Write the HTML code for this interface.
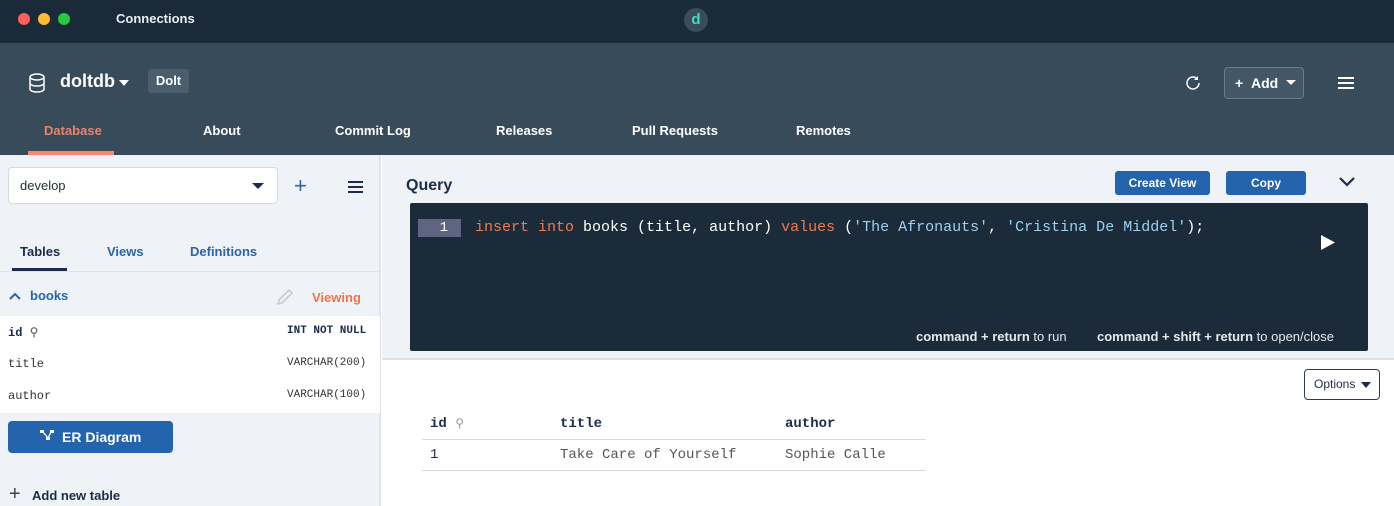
<!DOCTYPE html>
<html><head><meta charset="utf-8"><style>
*{box-sizing:border-box;margin:0;padding:0}
body{width:1394px;height:506px;overflow:hidden;font-family:"Liberation Sans",sans-serif;background:#fff;position:relative}
.abs{position:absolute}
.mono{font-family:"Liberation Mono","DejaVu Sans Mono",monospace}
</style></head><body>
<div class="abs" style="left:0;top:0;width:1394px;height:43px;background:#1b2a39"></div>
<div class="abs" style="left:18px;top:13px;width:12px;height:12px;border-radius:50%;background:#fe5f57"></div>
<div class="abs" style="left:38px;top:13px;width:12px;height:12px;border-radius:50%;background:#febc2e"></div>
<div class="abs" style="left:58px;top:13px;width:12px;height:12px;border-radius:50%;background:#28c840"></div>
<div class="abs" style="left:116px;top:11px;color:#e8edf2;font-size:13px;font-weight:bold">Connections</div>
<div class="abs" style="left:684px;top:8px;width:24px;height:24px;border-radius:50%;background:#3a4d5c;color:#3ee0c0;font-weight:bold;font-size:15px;text-align:center;line-height:23px">d</div>

<div class="abs" style="left:0;top:43px;width:1394px;height:112px;background:#384b5b"></div>
<svg class="abs" style="left:28px;top:73px" width="18" height="20" viewBox="0 0 18 20" fill="none" stroke="#fff" stroke-width="1.5"><ellipse cx="9" cy="4" rx="7" ry="3"/><path d="M2 4v12c0 1.7 3.1 3 7 3s7-1.3 7-3V4M2 10c0 1.7 3.1 3 7 3s7-1.3 7-3"/></svg>
<div class="abs" style="left:60px;top:71px;color:#fff;font-size:18px;font-weight:bold">doltdb</div>
<div class="abs" style="left:119px;top:80px;border-left:5px solid transparent;border-right:5px solid transparent;border-top:6px solid #fff"></div>
<div class="abs" style="left:148px;top:69px;width:41px;height:24px;border-radius:3px;background:#4b5e6e;color:#fff;font-size:13px;font-weight:bold;text-align:center;line-height:24px">Dolt</div>
<svg class="abs" style="left:1184px;top:74px" width="18" height="18" viewBox="0 0 18 18" fill="none" stroke="#fff" stroke-width="1.5"><path d="M15 9a6 6 0 1 1-2-4.5"/><path d="M14 2l0 4h-4z" fill="#fff" stroke="none"/></svg>
<div class="abs" style="left:1224px;top:67px;width:80px;height:32px;border:1px solid #6a7b89;border-radius:4px;background:#445767;color:#fff;font-size:14px;font-weight:bold;line-height:30px;padding-left:10px">+ &nbsp;Add</div>
<div class="abs" style="left:1286px;top:80px;border-left:5px solid transparent;border-right:5px solid transparent;border-top:5px solid #fff"></div>
<div class="abs" style="left:1338px;top:77px;width:16px;height:2px;background:#fff;box-shadow:0 5px 0 #fff,0 10px 0 #fff"></div>
<div class="abs" style="left:44px;top:123px;color:#e8846c;font-size:13px;font-weight:bold">Database</div>
<div class="abs" style="left:28px;top:151px;width:86px;height:4px;background:#f28b6c"></div>
<div class="abs" style="left:203px;top:123px;color:#fff;font-size:13px;font-weight:bold">About</div>
<div class="abs" style="left:335px;top:123px;color:#fff;font-size:13px;font-weight:bold">Commit Log</div>
<div class="abs" style="left:496px;top:123px;color:#fff;font-size:13px;font-weight:bold">Releases</div>
<div class="abs" style="left:632px;top:123px;color:#fff;font-size:13px;font-weight:bold">Pull Requests</div>
<div class="abs" style="left:796px;top:123px;color:#fff;font-size:13px;font-weight:bold">Remotes</div>

<!-- left panel -->
<div class="abs" style="left:0;top:155px;width:381px;height:351px;background:#eff2f7;border-right:2px solid #dfe3ea"></div>
<div class="abs" style="left:8px;top:167px;width:270px;height:37px;background:#fff;border:1px solid #d5dae2;border-radius:4px;font-size:13px;color:#233;line-height:36px;padding-left:11px">develop</div>
<div class="abs" style="left:252px;top:183px;border-left:6px solid transparent;border-right:6px solid transparent;border-top:6px solid #1c2b4a"></div>
<div class="abs" style="left:294px;top:178px;color:#2a64ad;font-size:22px;line-height:16px">+</div>
<div class="abs" style="left:348px;top:181px;width:15px;height:2px;background:#1c2b4a;box-shadow:0 5px 0 #1c2b4a,0 10px 0 #1c2b4a"></div>
<div class="abs" style="left:20px;top:244px;color:#1c2b4a;font-size:13px;font-weight:bold">Tables</div>
<div class="abs" style="left:12px;top:268px;width:55px;height:3px;background:#1c2b4a"></div>
<div class="abs" style="left:107px;top:244px;color:#2a64ad;font-size:13px;font-weight:bold">Views</div>
<div class="abs" style="left:190px;top:244px;color:#2a64ad;font-size:13px;font-weight:bold">Definitions</div>
<div class="abs" style="left:0;top:271px;width:380px;height:1px;background:#dfe3ea"></div>
<svg class="abs" style="left:9px;top:292px" width="12" height="8" viewBox="0 0 12 8" fill="none" stroke="#2a64ad" stroke-width="2"><path d="M1 7l5-5 5 5"/></svg>
<div class="abs" style="left:30px;top:288px;color:#2a64ad;font-size:13px;font-weight:bold">books</div>
<svg class="abs" style="left:275px;top:287px" width="20" height="20" viewBox="0 0 20 20" fill="none" stroke="#c5c9cf" stroke-width="1.5"><path d="M3 17l1-4L14 3l3 3L7 16z"/></svg>
<div class="abs" style="left:312px;top:290px;color:#f0724a;font-size:13px;font-weight:bold">Viewing</div>
<div class="abs" style="left:0;top:316px;width:380px;height:97px;background:#fff"></div>
<div class="abs mono" style="left:8px;top:325px;color:#1c2b4a;font-size:12px;font-weight:bold">id <span style="font-weight:normal;color:#555">⚲</span></div>
<div class="abs mono" style="left:287px;top:325px;color:#1c2b4a;font-size:11px;font-weight:bold">INT NOT NULL</div>
<div class="abs mono" style="left:8px;top:357px;color:#333;font-size:12px">title</div>
<div class="abs mono" style="left:287px;top:357px;color:#333;font-size:11px">VARCHAR(200)</div>
<div class="abs mono" style="left:8px;top:389px;color:#333;font-size:12px">author</div>
<div class="abs mono" style="left:287px;top:389px;color:#333;font-size:11px">VARCHAR(100)</div>
<div class="abs" style="left:8px;top:421px;width:165px;height:32px;border-radius:4px;background:#2364ad;color:#fff;font-size:14px;font-weight:bold;line-height:32px;padding-left:54px">ER Diagram</div>
<svg class="abs" style="left:40px;top:430px" width="14" height="11" viewBox="0 0 14 11" fill="#fff"><rect x="0" y="0" width="4" height="3"/><rect x="10" y="0" width="4" height="3"/><rect x="6" y="7" width="4" height="3"/><path d="M3 2l5 6M11 2l-3 6" stroke="#fff" stroke-width="1.3"/></svg>
<div class="abs" style="left:9px;top:484px;color:#444;font-size:20px;line-height:20px">+</div>
<div class="abs" style="left:32px;top:488px;color:#1c2b4a;font-size:13px;font-weight:bold">Add new table</div>

<!-- main -->
<div class="abs" style="left:382px;top:155px;width:1012px;height:205px;background:#eff2f7;border-bottom:2px solid #dfe2e7"></div>
<div class="abs" style="left:406px;top:177px;color:#1c2b4a;font-size:16px;font-weight:bold">Query</div>
<div class="abs" style="left:1115px;top:171px;width:95px;height:24px;border-radius:3px;background:#2364ad;color:#fff;font-size:12px;font-weight:bold;text-align:center;line-height:24px">Create View</div>
<div class="abs" style="left:1226px;top:171px;width:80px;height:24px;border-radius:3px;background:#2364ad;color:#fff;font-size:12px;font-weight:bold;text-align:center;line-height:24px">Copy</div>
<svg class="abs" style="left:1339px;top:177px" width="16" height="10" viewBox="0 0 16 10" fill="none" stroke="#1c2b4a" stroke-width="2.2"><path d="M1 1l7 7 7-7"/></svg>
<div class="abs" style="left:410px;top:203px;width:958px;height:148px;background:#1c2b3a;border-radius:2px"></div>
<div class="abs mono" style="left:418px;top:219px;width:43px;height:18px;background:#5f6580;color:#fff;font-size:14px;text-align:right;padding-right:13px;line-height:18px">1</div>
<div class="abs mono" style="left:475px;top:219px;color:#fff;font-size:15px;line-height:18px;white-space:pre"><span style="color:#ee7a4e">insert</span> <span style="color:#ee7a4e">into</span> books (title, author) <span style="color:#ee7a4e">values</span> (<span style="color:#9ed0f0">'The Afronauts'</span>, <span style="color:#9ed0f0">'Cristina De Middel'</span>);</div>
<svg class="abs" style="left:1321px;top:235px" width="14" height="15" viewBox="0 0 14 15"><path d="M0 0l14 7.5L0 15z" fill="#fff"/></svg>
<div class="abs" style="left:916px;top:329px;color:#e6e9ec;font-size:13px"><b>command + return</b> to run</div>
<div class="abs" style="left:1097px;top:329px;color:#e6e9ec;font-size:13px"><b>command + shift + return</b> to open/close</div>

<div class="abs" style="left:1304px;top:369px;width:76px;height:31px;border:1px solid #2a3a55;border-radius:4px;font-size:12px;color:#1c2b4a;line-height:29px;padding-left:9px">Options</div>
<div class="abs" style="left:1361px;top:382px;border-left:5px solid transparent;border-right:5px solid transparent;border-top:6px solid #1c2b4a"></div>
<div class="abs mono" style="left:430px;top:416px;color:#1c2b4a;font-size:14px;font-weight:bold">id <span style="font-weight:normal;color:#999;font-size:12px">⚲</span></div>
<div class="abs mono" style="left:560px;top:416px;color:#1c2b4a;font-size:14px;font-weight:bold">title</div>
<div class="abs mono" style="left:785px;top:416px;color:#1c2b4a;font-size:14px;font-weight:bold">author</div>
<div class="abs" style="left:422px;top:439px;width:504px;height:1px;background:#d8dadd"></div>
<div class="abs mono" style="left:430px;top:447px;color:#1c2b4a;font-size:14px">1</div>
<div class="abs mono" style="left:560px;top:447px;color:#555;font-size:14px">Take Care of Yourself</div>
<div class="abs mono" style="left:785px;top:447px;color:#555;font-size:14px">Sophie Calle</div>
<div class="abs" style="left:422px;top:470px;width:504px;height:1px;background:#d8dadd"></div>
</body></html>
